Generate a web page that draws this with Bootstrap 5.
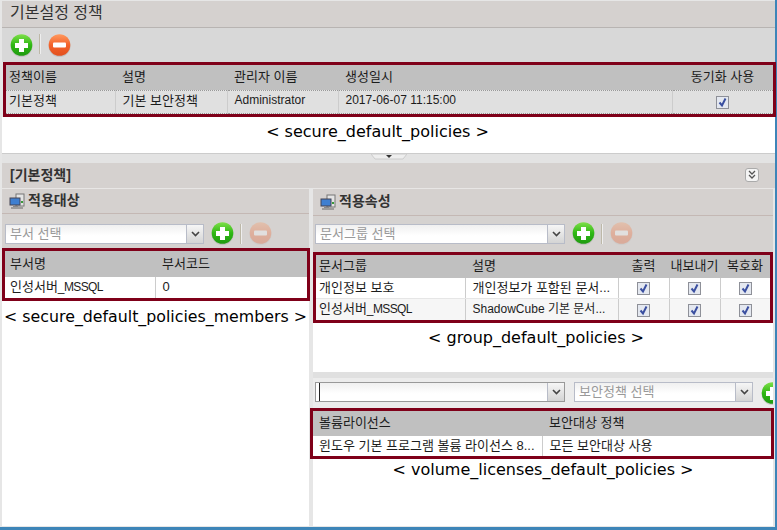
<!DOCTYPE html>
<html lang="ko">
<head>
  <meta charset="UTF-8" />
  <meta name="viewport" content="width=device-width, initial-scale=1" />
  <title>기본설정 정책</title>
  <link href="https://cdn.jsdelivr.net/npm/bootstrap@5.3.2/dist/css/bootstrap.min.css" rel="stylesheet" />
  <style>
    body {
      margin: 0;
      width: 777px;
      height: 530px;
      overflow: hidden;
      background: #fff;
      color: #1c1c1c;
      font: 13px/1.2 "Liberation Sans", "Noto Sans CJK KR", sans-serif;
    }
    #app {
      width: 777px;
      height: 530px;
      padding: 1px 0 0 2px;
      background: #e6e6e6;
      border-right: 2px solid #3d85b8;
      border-bottom: 3px solid #3d85b8;
    }
    .page-title {
      height: 27px;
      padding: 2px 8px;
      background: #d5d1cf;
      border-bottom: 1px solid #b8b4b2;
      font-size: 16px;
      color: #333;
    }
    .tool-row { background: #d8d8d8; }
    .top-tools { height: 34px; padding: 6px 8px 0; }
    .divider-v { width: 2px; height: 20px; background: #bdb8a8; margin: 0 7px 0 6px; border-right: 1px solid #eee; }
    .round-ico { width: 23px; height: 23px; flex: none; }
    .is-off { opacity: .3; }

    .red-box { border: 3px solid #7f0019; }
    .table.grid-tbl { table-layout: fixed; width: 100%; margin: 0; border-collapse: collapse; font-size: 13px; }
    .table.grid-tbl > thead > tr > th {
      height: 25px;
      padding: 0 3px 0 7px;
      background: #c0c0c0;
      color: #1c1c1c;
      font-weight: 400;
      border: 0;
      vertical-align: middle;
      box-shadow: none;
    }
    .table.grid-tbl > tbody > tr > td {
      height: 21px;
      padding: 0 3px 0 7px;
      background: #fff;
      color: #1c1c1c;
      border: 0;
      border-right: 1px solid #ccc;
      white-space: nowrap;
      overflow: hidden;
      text-overflow: ellipsis;
      vertical-align: middle;
      box-shadow: none;
    }
    .table.grid-tbl > tbody > tr > td:last-child { border-right: 0; }
    .table.grid-tbl > * > tr > .mid { text-align: center; padding: 0; }
    .table.grid-tbl > * > tr > .latin { font-size: 12px; }
    .mini { font-size: 12px; letter-spacing: -.6px; }

    .top-box { margin: 0 -1px 0 1px; }
    .table.top-tbl > * > tr > :first-child { padding-left: 3px; }
    .table.top-tbl > tbody > tr > td {
      height: 23px;
      padding-bottom: 2px;
      background: #e0e0e0;
      border-top: 1px dotted #999;
      border-bottom: 1px dotted #999;
    }
    .c1 { width: 109px; }
    .c2 { width: 112px; }
    .c3 { width: 111px; }
    .c4 { width: 334px; }
    .sheet { background: #fff; }
    .top-sheet { height: 36px; }
    .label-cap {
      font-family: "DejaVu Sans", sans-serif;
      font-size: 16px;
      text-align: center;
      color: #000;
      line-height: 18px;
      white-space: nowrap;
    }
    .top-sheet .label-cap { padding: 6px 22px 0 0; }
    .splitter { height: 10px; background: #e3e3e3; border-top: 1px solid #ccc; }
    .sub-title {
      height: 25px;
      padding: 4px 8px;
      background: #d5d1cf;
      font-size: 14px;
      font-weight: 700;
      color: #333;
    }
    .fold-btn {
      width: 14px;
      height: 14px;
      background: #f4f4f4;
      border: 1px solid #aaa;
      border-radius: 3px;
    }
    .panes { height: 338px; gap: 4px; }
    .pane-l { width: 307px; }
    .pane-r { width: 460px; }
    .pane-l, .pane-r { background: #fff; }
    .pane-head {
      padding: 0 8px 0 7px;
      background: #d5d1cf;
      border-top: 1px solid #e8e6e5;
      border-bottom: 1px solid #c4b8b4;
      font-size: 14px;
      font-weight: 700;
      color: #333;
      gap: 3px;
    }
    .pane-l .pane-head { height: 26px; }
    .pane-r .pane-head { height: 28px; }
    .pane-tools { background: #d5d2d0; }
    .l-tools { height: 34px; padding: 6px 3px 0; }
    .r-tools { height: 36px; padding: 0 2px; }
    .combo {
      height: 20px;
      background: #fff;
      border: 1px solid #b8bcc8;
    }
    .combo .form-control {
      height: 18px;
      min-height: 0;
      padding: 0 4px;
      border: 0;
      border-radius: 0;
      font-size: 13px;
      background: linear-gradient(#f0f0f0, #fff 60%);
    }
    .combo .form-control::placeholder { color: #999; }
    .combo-arrow {
      width: 17px;
      flex: none;
      background: linear-gradient(#f6f6f6, #d4d4d4);
      border-left: 1px solid #b8bcc8;
    }
    .add-gap { margin-left: 7px; }
    .combo-l { width: 199px; }
    .combo-r { width: 250px; }
    .combo-v { width: 250px; border-color: #999; padding-left: 3px; }
    .combo-v .form-control { border-left: 1px solid #222; }
    .combo-p { width: 179px; margin-left: 9px; }
    .l-box { margin: 0 -1px 0 0; }
    .table.l-tbl > thead > tr > th { height: 26px; }
    .table.l-tbl > * > tr > :first-child { padding-left: 5px; }
    .l1 { width: 150px; }
    .l-sheet .label-cap { padding-top: 7px; font-size: 15.800px; }
    .g1 { width: 149px; }
    .g2 { width: 153px; }
    .g3 { width: 51px; }
    .g4 { width: 51px; }
    .table.g-tbl > thead > tr > th { height: 23px; }
    .table.g-tbl > * > tr > :first-child { padding-left: 3px; }
    .table.g-tbl > tbody > tr > td { border-bottom: 1px solid #e6e6e6; }
    .table.g-tbl > tbody > tr:last-child > td { border-bottom: 0; background: #f6f6f6; }
    .r-sheet { height: 49px; }
    .r-sheet .label-cap { padding: 6px 14px 0 0; }
    .band { height: 6px; background: #e0e0e0; }
    .v-tools {
      height: 30px;
      padding: 4px 2px 0;
      background: #ececec;
      overflow: hidden;
    }
    .v-box { margin: 0 -1px 0 -3px; }
    .table.v-tbl > * > tr > :first-child { padding-left: 6px; }
    .table.v-tbl > tbody > tr > td { height: 20px; }
    .v1 { width: 229px; }
    .v-sheet .label-cap { padding-top: 2px; }
    input.chk.form-check-input:checked[type=checkbox] {
      width: 13px;
      height: 13px;
      margin: 0;
      vertical-align: middle;
      float: none;
      border: 1px solid #8e9098;
      border-radius: 0;
      background-color: #e4e8f0;
      background-size: 11px 11px;
      background-image: url("data:image/svg+xml,%3csvg xmlns='http://www.w3.org/2000/svg' viewBox='0 0 11 11'%3e%3cpath fill='none' stroke='%233a4fa0' stroke-width='2' d='M2.5 5.500 5 8.500 8.500 1.500'/%3e%3c/svg%3e");
    }
    .svg-defs { position: absolute; width: 0; height: 0; }
  </style>
</head>
<body>

<svg class="svg-defs" aria-hidden="true">
  <defs>
    <linearGradient id="gGreen" x1="0" y1="0" x2="0" y2="1">
      <stop offset="0" stop-color="#7fe04a" />
      <stop offset=".5" stop-color="#2fb814" />
      <stop offset="1" stop-color="#1f9a10" />
    </linearGradient>
    <linearGradient id="gRed" x1="0" y1="0" x2="0" y2="1">
      <stop offset="0" stop-color="#ff9a60" />
      <stop offset=".5" stop-color="#f4622a" />
      <stop offset="1" stop-color="#e2501e" />
    </linearGradient>
    <symbol id="icoPlus" viewBox="0 0 23 23">
      <circle cx="11.500" cy="12" r="11" fill="#a9a9a9" opacity=".5" />
      <circle cx="11.500" cy="11" r="10.800" fill="url(#gGreen)" />
      <path fill="#fff" d="M9 5h5v4h4v5h-4v4H9v-4H5V9h4z" />
    </symbol>
    <symbol id="icoMinus" viewBox="0 0 23 23">
      <circle cx="11.500" cy="12" r="11" fill="#a9a9a9" opacity=".5" />
      <circle cx="11.500" cy="11" r="10.800" fill="url(#gRed)" />
      <rect x="5" y="8.500" width="13" height="5" rx="1" fill="#fff" />
    </symbol>
    <symbol id="icoPc" viewBox="0 0 16 16">
      <rect x="7" y="1" width="8" height="12" fill="#e4e4e4" stroke="#777" />
      <rect x="12" y="8" width="2" height="2" fill="#3a9a3a" />
      <rect x="1" y="5" width="10" height="7" fill="#3f7fd0" stroke="#445" />
      <path d="M4 13h5v1H4z" fill="#888" />
      <path d="M2 15h12" stroke="#666" />
    </symbol>
  </defs>
</svg>

<div id="app" class="d-flex flex-column">
  <!-- top policy list -->
  <div class="page-title">기본설정 정책</div>
  <div class="tool-row top-tools d-flex align-items-start">
    <svg class="round-ico"><use href="#icoPlus" /></svg>
    <span class="divider-v"></span>
    <svg class="round-ico"><use href="#icoMinus" /></svg>
  </div>
  <div class="red-box top-box">
    <table class="table grid-tbl top-tbl">
      <thead>
        <tr>
          <th class="c1">정책이름</th><th class="c2">설명</th><th class="c3">관리자 이름</th><th class="c4">생성일시</th><th class="mid">동기화 사용</th>
        </tr>
      </thead>
      <tbody>
        <tr>
          <td>기본정책</td><td>기본 보안정책</td><td class="latin">Administrator</td><td class="latin">2017-06-07 11:15:00</td>
          <td class="mid"><input class="form-check-input chk" type="checkbox" checked /></td>
        </tr>
      </tbody>
    </table>
  </div>
  <div class="sheet top-sheet"><div class="label-cap">&lt; secure_default_policies &gt;</div></div>
  <div class="splitter d-flex justify-content-center">
    <svg width="36" height="6" viewBox="0 0 36 6"><path d="M0 0h36l-4 5H4z" fill="#eee" stroke="#ccc" /><path d="M15 1h6l-3 3z" fill="#333" /></svg>
  </div>

  <div class="sub-title d-flex justify-content-between align-items-center">
    <span>[기본정책]</span>
    <span class="fold-btn d-flex align-items-center justify-content-center me-2">
      <svg width="10" height="10" viewBox="0 0 10 10"><path d="M2 1l3 3 3-3M2 5l3 3 3-3" fill="none" stroke="#555" stroke-width="1.300" /></svg>
    </span>
  </div>

  <div class="panes d-flex">
    <!-- left pane -->
    <div class="pane-l d-flex flex-column">
      <div class="pane-head d-flex align-items-center">
        <svg width="16" height="16"><use href="#icoPc" /></svg>적용대상
      </div>
      <div class="pane-tools l-tools d-flex align-items-center">
        <div class="combo combo-l d-flex">
          <input class="form-control" type="text" placeholder="부서 선택" />
          <span class="combo-arrow d-flex align-items-center justify-content-center">
            <svg width="9" height="6" viewBox="0 0 9 6"><path d="M1 1l3.500 3.500L8 1" fill="none" stroke="#444" stroke-width="1.600" /></svg>
          </span>
        </div>
        <svg class="round-ico add-gap"><use href="#icoPlus" /></svg>
        <span class="divider-v"></span>
        <svg class="round-ico is-off"><use href="#icoMinus" /></svg>
      </div>
      <div class="red-box l-box">
        <table class="table grid-tbl l-tbl">
          <thead><tr><th class="l1">부서명</th><th>부서코드</th></tr></thead>
          <tbody><tr><td>인성서버<span class="mini">_MSSQL</span></td><td>0</td></tr></tbody>
        </table>
      </div>
      <div class="sheet l-sheet flex-grow-1"><div class="label-cap">&lt; secure_default_policies_members &gt;</div></div>
    </div>

    <!-- right pane -->
    <div class="pane-r d-flex flex-column">
      <div class="pane-head d-flex align-items-center">
        <svg width="16" height="16"><use href="#icoPc" /></svg>적용속성
      </div>
      <div class="pane-tools r-tools d-flex align-items-center">
        <div class="combo combo-r d-flex">
          <input class="form-control" type="text" placeholder="문서그룹 선택" />
          <span class="combo-arrow d-flex align-items-center justify-content-center">
            <svg width="9" height="6" viewBox="0 0 9 6"><path d="M1 1l3.500 3.500L8 1" fill="none" stroke="#444" stroke-width="1.600" /></svg>
          </span>
        </div>
        <svg class="round-ico add-gap"><use href="#icoPlus" /></svg>
        <span class="divider-v"></span>
        <svg class="round-ico is-off"><use href="#icoMinus" /></svg>
      </div>
      <div class="red-box">
        <table class="table grid-tbl g-tbl">
          <thead>
            <tr><th class="g1">문서그룹</th><th class="g2">설명</th><th class="g3 mid">출력</th><th class="g4 mid">내보내기</th><th class="mid">복호화</th></tr>
          </thead>
          <tbody>
            <tr>
              <td>개인정보 보호</td><td>개인정보가 포함된 문서...</td>
              <td class="mid"><input class="form-check-input chk" type="checkbox" checked /></td>
              <td class="mid"><input class="form-check-input chk" type="checkbox" checked /></td>
              <td class="mid"><input class="form-check-input chk" type="checkbox" checked /></td>
            </tr>
            <tr>
              <td>인성서버<span class="mini">_MSSQL</span></td><td class="latin">ShadowCube 기본 문서...</td>
              <td class="mid"><input class="form-check-input chk" type="checkbox" checked /></td>
              <td class="mid"><input class="form-check-input chk" type="checkbox" checked /></td>
              <td class="mid"><input class="form-check-input chk" type="checkbox" checked /></td>
            </tr>
          </tbody>
        </table>
      </div>
      <div class="sheet r-sheet"><div class="label-cap">&lt; group_default_policies &gt;</div></div>
      <div class="band"></div>
      <div class="v-tools d-flex">
        <div class="combo combo-v d-flex flex-shrink-0">
          <input class="form-control" type="text" />
          <span class="combo-arrow d-flex align-items-center justify-content-center">
            <svg width="9" height="6" viewBox="0 0 9 6"><path d="M1 1l3.500 3.500L8 1" fill="none" stroke="#444" stroke-width="1.600" /></svg>
          </span>
        </div>
        <div class="combo combo-p d-flex flex-shrink-0">
          <input class="form-control" type="text" placeholder="보안정책 선택" />
          <span class="combo-arrow d-flex align-items-center justify-content-center">
            <svg width="9" height="6" viewBox="0 0 9 6"><path d="M1 1l3.500 3.500L8 1" fill="none" stroke="#444" stroke-width="1.600" /></svg>
          </span>
        </div>
        <svg class="round-ico ms-2 flex-shrink-0"><use href="#icoPlus" /></svg>
      </div>
      <div class="red-box v-box">
        <table class="table grid-tbl v-tbl">
          <thead><tr><th class="v1">볼륨라이선스</th><th>보안대상 정책</th></tr></thead>
          <tbody><tr><td>윈도우 기본 프로그램 볼륨 라이선스 8...</td><td>모든 보안대상 사용</td></tr></tbody>
        </table>
      </div>
      <div class="sheet v-sheet flex-grow-1">
        <div class="label-cap">&lt; volume_licenses_default_policies &gt;</div>
      </div>
    </div>
  </div>
</div>

</body>
</html>
